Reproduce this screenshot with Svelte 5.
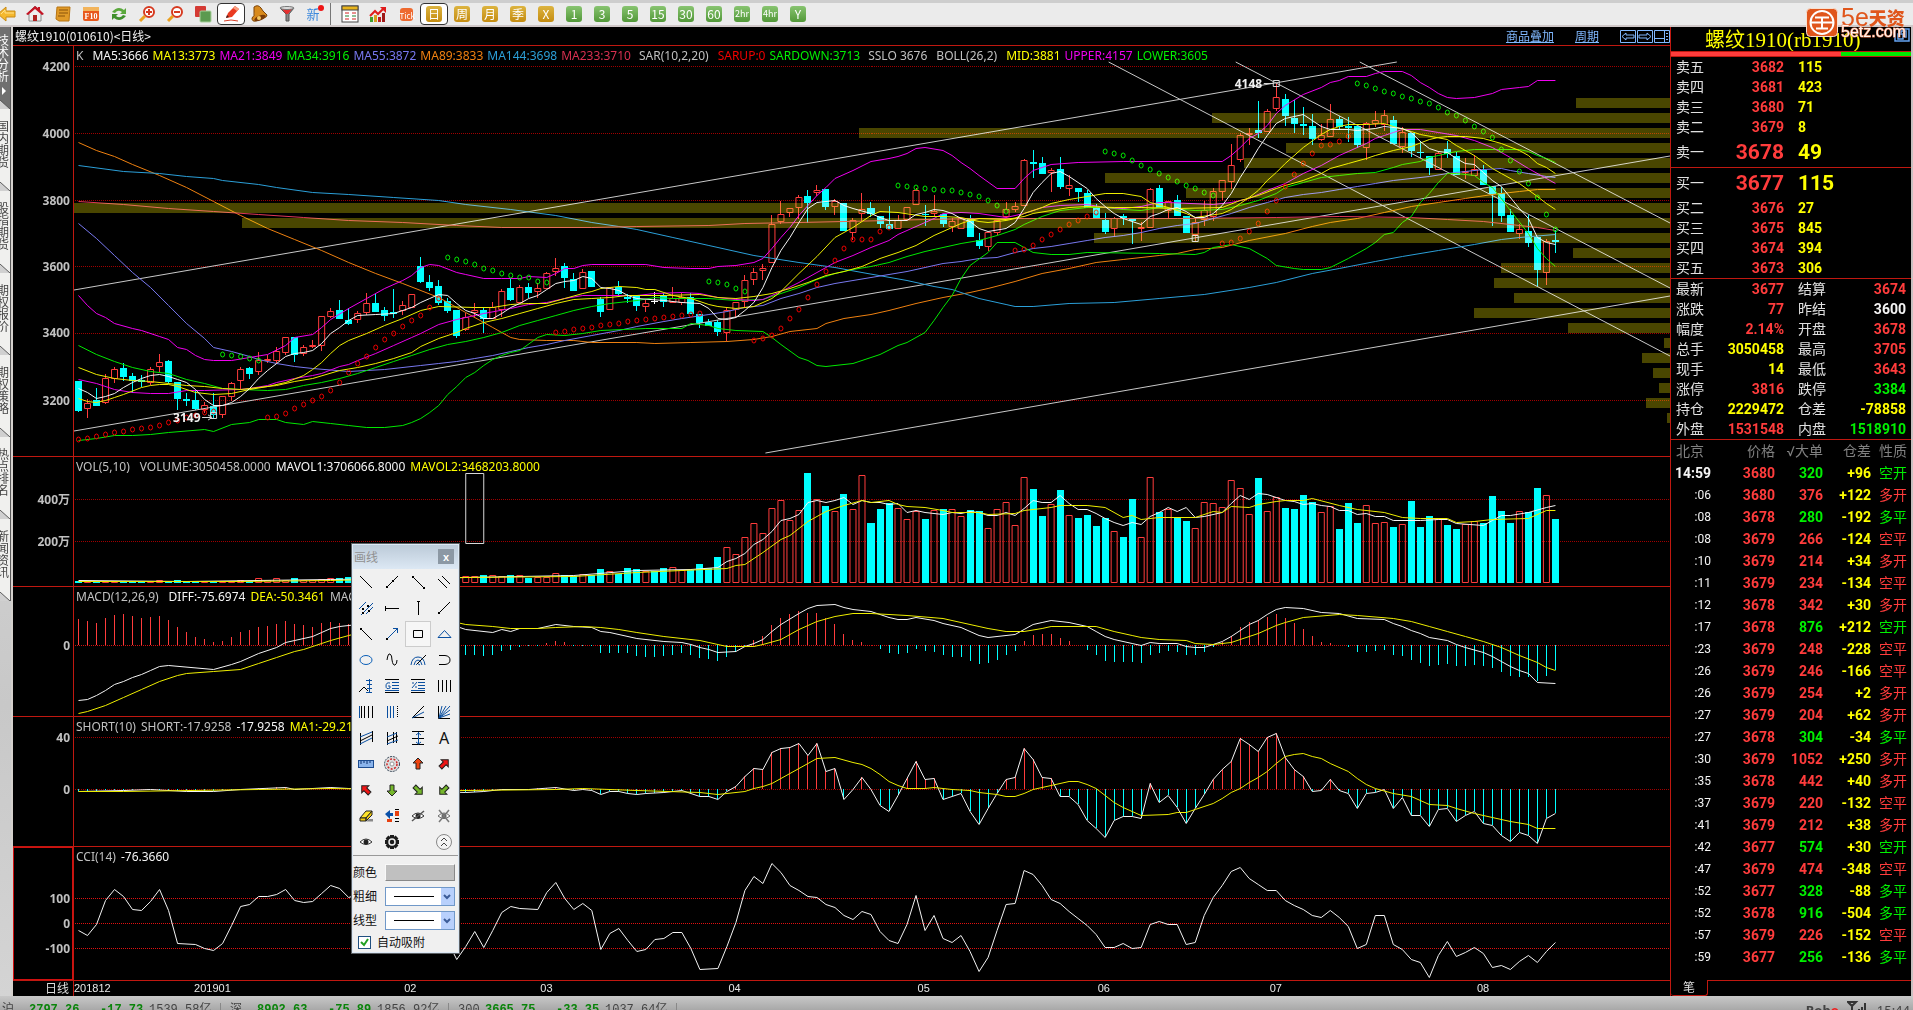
<script>
  const STEP = 9;
  const X0 = 79.5;
  const xOf = (i) => X0 + STEP * i;

  // Each bar: direction (r = up, c = down, w = flat), high, body top, body bottom, low.
  const candles = `c381,381,411,412 r399,403,409,418 c388,400,406,406 r374,378,403,404 r367,369,379,383 c363,368,377,381 c373,376,381,393 c375,380,382,387 r367,369,383,385 r354,362,367,373
c360,361,382,384 c382,382,399,410 c393,399,401,406 c390,400,409,410 r402,405,410,413 c393,406,415,418 r396,396,415,418 r382,383,397,401 r367,369,381,390 c367,368,374,379
r352,360,372,375 r355,359,361,363 r347,351,361,363 r337,337,353,355 c337,337,355,362 r345,347,354,356 r340,345,347,348 r316,316,346,351 r308,311,317,318 c300,310,319,319
c308,320,324,325 r311,313,320,323 r293,303,313,315 c294,303,312,312 c307,310,316,321 c289,312,314,318 r301,305,311,315 r294,294,308,308 c257,266,282,283 c275,282,288,291
c280,286,303,305 c298,301,311,313 c310,310,336,338 r313,317,330,331 r303,310,313,317 c308,310,319,333 r302,307,319,319 r289,291,310,317 c279,288,300,301 r285,287,303,303
c283,287,293,298 r283,288,292,298 r272,273,289,289 r258,268,272,276 c263,266,278,288 c273,279,291,291 r269,272,289,289 c271,271,287,287 c297,299,312,317 r287,287,310,310
c281,287,294,297 c294,297,299,303 c295,295,306,311 r300,303,307,312 w292,301,302,304 c293,296,302,307 r287,298,303,303 r293,297,303,305 c293,297,314,314 c314,314,323,328
c319,322,326,326 c320,322,332,336 r308,310,333,341 r302,302,310,318 r275,280,302,307 r268,272,280,285 r264,268,271,280 r215,224,263,263 r201,214,222,224 r208,208,213,217
r195,197,208,219 c190,196,203,223 r185,190,193,196 c189,189,207,210 r199,201,207,215 c203,203,231,231 r218,220,233,240 r193,209,214,221 c202,208,214,217 c216,216,224,228
c206,224,229,229 r215,220,229,229 r207,207,220,220 r188,190,205,205 c205,214,215,226 r195,211,214,217 c214,214,224,227 r218,221,227,232 r218,218,229,229 c215,218,237,237
c233,240,246,249 r232,232,247,251 r220,220,233,235 r202,209,217,219 r202,206,210,212 r159,160,206,206 c150,162,164,178 c157,163,174,174 r168,170,173,192 c157,169,187,189
r175,185,189,196 c188,188,192,202 c190,193,208,208 c204,207,218,218 c213,220,232,234 r217,218,229,237 c214,216,218,225 c219,219,221,244 r222,227,229,241 r188,189,228,228
c185,188,208,208 r201,201,211,219 c195,200,216,216 c216,216,233,233 r218,222,235,242 r201,210,220,226 r188,191,217,221 r180,180,192,200 r144,165,182,189 r133,135,160,162
r128,133,135,145 c101,130,133,138 r109,111,132,132 r83,97,109,111 c94,99,116,126 c100,118,124,133 c107,124,126,135 c114,126,139,145 r124,135,140,141 r104,119,137,137
c116,119,127,129 c117,126,128,142 c126,126,145,148 r122,123,148,160 r111,120,124,127 r110,115,125,131 c116,120,144,144 r127,132,147,153 c133,133,151,157 c141,152,153,158
c156,156,168,175 r151,153,170,170 c141,149,154,158 c152,156,175,175 r158,171,173,179 r155,169,176,176 c165,170,185,185 c186,186,194,226 c187,193,216,222 c209,215,232,232
r224,229,234,239 c215,231,243,247 c237,237,270,287 r239,241,273,285 c230,240,242,253`
    .split(/\s+/)
    .map((s, i) => {
      const [h, t, b, l] = s.slice(1).split(',').map(Number);
      return { i, dir: s[0], h, t, b, l };
    });

  const volTops = `581 581 581 581 581 581 581 581 581 580 581 580 581 581 581 581 581 581 580 581 578 580 578 580 578 580 580 579 578 578
577 577 576 576 577 576 577 577 574 575 574 575 575 576 576 575 575 576 575 575 578 577 577 573 575 576 574 575 569 571
574 568 569 571 571 568 567 570 570 564 568 557 547 554 537 523 533 508 500 520 510 473 499 506 511 494 509 475 523 509
503 508 519 511 519 510 509 509 516 510 511 528 509 502 525 477 489 516 504 490 515 518 515 526 518 531 537 499 537 477
512 509 518 521 528 502 503 507 480 488 514 478 511 497 508 509 495 502 512 506 529 503 523 505 523 522 527 524 501 527
516 519 525 529 524 521 523 496 511 523 511 512 488 495 519`
    .split(/\s+/)
    .map(Number);

  const macdEnds = `619 621 623 618 615 614 616 618 617 616 620 627 632 637 639 642 641 637 632 630 627 626 624 621 624 625 627 623 622 623
624 626 628 629 631 633 634 636 638 640 642 648 652 655 655 656 655 651 650 647 646 646 643 641 642 646 646 646 653 653
653 653 656 657 657 656 655 653 655 658 659 661 657 652 646 640 636 625 618 614 611 613 613 618 624 634 640 642 645 649
653 654 653 649 651 652 655 657 657 661 664 663 660 655 651 641 635 634 634 638 641 645 650 655 661 662 662 662 663 655
653 651 652 655 655 652 647 642 636 627 622 620 617 614 618 623 629 636 642 643 645 647 652 652 651 650 655 656 660 663
666 665 664 666 666 665 666 668 672 676 677 677 681 676 670`
    .split(/\s+/)
    .map(Number);

  const shortLine =
    '0,791 5,790 8,789 12,791 15,791 18,789 23,787 24,789 28,787 30,788 36,790 43,792 45,791 47,789 50,789 53,787 55,790 56,789 57,790 58,794 59,791 60,791 61,793 62,794 63,793 65,792 67,790 69,796 70,796 71,799 72,791 73,786 74,776 75,768 76,769 77,752 78,748 79,747 80,743 81,755 82,743 83,771 84,768 85,799 86,789 87,777 88,789 89,805 90,811 91,795 92,778 93,761 94,779 95,778 96,799 97,796 98,793 99,811 100,824 101,808 102,793 103,779 104,777 105,748 106,759 107,777 108,778 109,796 110,796 111,804 112,820 113,828 114,837 115,820 116,816 117,816 118,818 119,783 120,802 121,795 122,807 123,823 124,808 125,794 126,779 127,769 128,761 129,738 130,744 131,751 132,737 133,733 134,757 135,769 136,776 137,791 138,790 139,779 140,790 141,793 142,808 143,793 144,792 145,789 146,808 147,797 148,815 149,815 150,826 151,809 152,808 153,821 154,815 155,811 156,823 157,825 158,835 159,841 160,832 161,835 162,843 163,818 164,813';

  function expand(str) {
    const pts = str.split(' ').map((p) => p.split(',').map(Number));
    const out = [];
    for (let k = 0; k < pts.length - 1; k++) {
      const [a, ya] = pts[k];
      const [b, yb] = pts[k + 1];
      for (let i = a; i < b; i++) out.push(ya + ((yb - ya) * (i - a)) / (b - a));
    }
    out.push(pts[pts.length - 1][1]);
    return out;
  }
  const shortVals = expand(shortLine);

  const toPoints = (str) =>
    str
      .split(' ')
      .map((p) => {
        const [i, y] = p.split(',').map(Number);
        return `${xOf(i)},${y + 0.5}`;
      })
      .join(' ');

  const line = (color, data) => ({ color, points: toPoints(data) });

  const mainLines = [
    line('#ee8010', '0,142 2,150 4,156 6,164 9,175 12,187 15,201 18,215 21,228 24,239 27,250 30,262 33,273 36,283 40,297 43,312 46,327 48,337 49,339 52,340 55,340 57,342 62,342 64,343 68,342 72,341 75,339 77,336 79,331 82,328 83,323 85,318 88,314 90,310 93,303 96,297 99,292 101,288 104,281 107,273 110,268 113,262 116,259 120,255 122,253 124,249 127,247 130,240 134,233 137,226 139,222 142,218 145,212 148,206 151,202 154,198 157,194 160,191 162,189 164,189'),
    line('#2b9fd8', '0,165 5,171 9,173 12,176 15,178 16,180 20,184 22,187 26,192 30,194 35,197 40,200 43,204 48,209 53,215 57,222 60,226 62,229 66,237 70,245 75,255 80,262 84,267 87,272 92,280 95,286 97,289 100,298 103,304 104,306 106,306 110,303 115,302 120,298 125,294 130,287 133,282 137,273 140,268 144,261 147,256 151,250 155,244 158,239 160,237 164,234'),
    line('#e03858', '0,201 5,204 10,208 15,211 20,214 25,217 30,220 36,222 42,225 47,227 57,227 62,226 70,225 74,223 80,222 85,221 90,220 94,219 100,218 105,218 122,218 133,217 140,216 148,217 152,219 156,221 160,225 162,227 164,230'),
    line('#7878f0', '0,223 2,238 4,255 6,272 8,287 10,305 12,323 14,338 15,347 17,351 19,356 20,359 22,363 24,366 26,368 30,371 34,369 38,365 40,363 42,361 44,358 46,355 48,351 50,347 52,344 54,340 57,335 60,330 62,326 65,321 67,318 70,314 72,311 74,307 76,305 78,298 80,293 82,287 84,283 86,280 88,277 90,274 92,271 94,267 96,263 98,261 100,258 102,257 104,252 106,248 108,246 110,243 112,240 114,237 116,235 118,232 120,228 122,225 124,223 126,218 128,213 130,207 132,202 134,197 136,194 138,192 140,189 142,186 144,183 146,180 150,176 152,173 154,171 156,169 158,168 159,170 161,173 163,176 164,177'),
    line('#00e800', '0,345 2,354 4,361 6,367 8,371 10,373 12,379 14,383 16,388 18,389 21,390 23,389 25,385 27,382 29,378 31,373 33,367 35,361 37,355 39,349 41,344 43,341 45,337 47,332 49,325 51,320 53,315 55,310 57,306 59,303 62,300 64,297 66,298 70,298 73,300 76,299 78,293 80,287 82,279 84,273 86,269 88,266 90,262 92,256 94,251 96,247 98,243 100,240 102,235 104,229 105,224 106,220 107,216 108,213 109,210 110,209 112,207 114,207 116,209 118,210 120,207 124,210 127,209 129,205 131,200 133,193 134,187 136,182 138,177 140,175 142,173 144,172 146,167 147,164 149,161 150,157 151,155 152,153 153,151 154,150 155,149 160,149 161,151 162,155 163,158 164,162'),
    line('#e800e8', '0,379 2,383 4,389 6,392 8,393 10,393 12,390 14,390 18,389 19,388 21,385 22,382 24,378 26,375 27,373 29,366 30,364 31,360 33,353 35,345 37,337 38,333 40,324 42,319 45,313 48,308 50,304 52,302 54,298 56,295 62,295 64,293 67,292 69,293 71,297 73,299 75,300 76,299 77,295 78,291 80,282 82,272 84,262 86,255 88,247 90,240 91,234 92,230 94,222 95,218 96,213 98,212 100,213 103,217 105,213 107,207 109,205 112,204 114,207 116,208 118,206 120,202 121,202 126,204 128,202 130,198 132,190 134,183 136,173 138,165 139,160 140,155 141,151 142,147 143,143 144,138 145,135 146,132 147,129 149,129 151,132 153,135 155,140 157,147 159,157 161,168 163,178 164,183'),
    line('#eeee00', '0,367 2,374 4,378 6,380 8,381 10,383 12,385 14,386 16,388 18,389 20,387 22,385 24,381 26,378 29,370 31,367 33,363 35,358 37,352 38,346 40,338 42,332 43,328 45,322 47,318 49,313 51,308 53,303 55,299 57,298 59,297 61,295 65,295 69,294 71,297 73,298 75,296 77,293 79,288 81,282 83,275 85,271 87,266 89,258 91,252 93,245 94,240 95,235 97,227 98,223 99,220 100,218 103,219 105,216 106,213 108,210 110,207 112,206 115,207 118,207 122,208 127,207 129,200 131,195 133,188 134,185 136,180 138,173 139,168 141,163 143,158 144,155 146,150 148,146 150,139 151,137 152,136 154,136 156,138 158,143 160,150 161,155 162,163 163,167 164,173'),
    line('#eeee00', '0,398 1,401 2,402 3,400 4,397 5,394 7,387 8,385 9,384 10,384 11,386 13,392 15,394 17,393 19,389 21,386 23,382 25,375 26,369 27,362 28,353 29,345 30,340 32,333 34,325 36,318 38,310 40,306 44,307 46,307 48,304 50,303 52,303 54,298 56,293 57,291 58,288 60,286 62,287 63,289 64,289 65,292 66,295 68,298 70,304 71,306 73,308 75,306 76,302 77,298 78,291 80,273 82,256 84,237 86,227 88,215 89,211 91,212 94,216 96,216 98,217 100,221 101,222 103,220 104,218 105,213 107,207 108,203 110,199 112,196 114,193 116,193 118,196 119,202 121,207 123,213 124,217 127,213 128,209 129,203 130,197 131,190 132,180 133,172 134,163 136,147 138,134 139,129 140,126 141,124 143,124 145,123 146,126 148,131 149,134 152,139 153,145 155,155 157,168 158,173 160,183 162,196 163,203 164,209'),
    line('#f000f0', '0,295 1,305 2,313 3,317 4,323 6,328 7,330 9,336 10,339 11,347 12,349 13,355 14,359 15,360 17,360 19,357 21,354 23,345 24,337 26,334 27,327 28,319 30,308 32,298 34,288 36,280 37,275 38,267 39,264 40,265 42,272 43,274 45,278 47,278 49,278 50,276 52,277 53,273 54,268 55,268 56,265 57,264 63,264 65,267 68,268 70,268 71,266 73,265 75,262 76,258 77,248 78,237 79,227 80,215 81,205 82,195 83,187 84,178 86,170 88,161 90,158 91,156 92,153 93,148 94,147 96,150 97,155 98,162 99,168 100,175 102,188 104,188 105,178 106,170 107,167 108,164 111,162 116,161 127,161 128,155 129,147 130,138 131,133 132,125 133,113 134,105 136,94 138,87 139,82 140,80 141,76 143,76 144,73 145,71 147,71 148,75 149,82 150,87 151,93 152,97 153,98 155,97 157,93 158,89 160,87 161,86 162,80 164,80'),
    line('#00e800', '0,440 2,438 4,435 6,435 8,434 10,432 14,429 15,431 17,424 19,422 20,419 22,419 23,422 25,424 26,421 28,423 30,425 32,427 34,427 36,425 37,422 38,418 39,412 40,405 41,394 42,386 43,377 44,372 45,365 46,359 47,355 48,352 49,350 51,337 52,334 54,335 56,333 58,330 63,328 67,328 68,323 70,325 71,328 73,330 76,331 77,337 78,344 80,357 81,360 82,365 83,366 86,363 88,357 89,354 91,345 92,342 93,337 94,332 95,320 96,307 97,295 98,278 99,265 101,252 102,242 104,242 105,247 106,252 108,254 110,254 112,252 120,253 124,254 125,252 126,247 128,244 130,248 132,258 133,265 135,268 136,269 138,269 139,267 141,258 143,248 144,242 145,234 146,232 147,222 148,216 149,202 150,193 151,182 152,173 153,173 155,175 156,182 157,187 158,198 159,210 161,233 162,248 163,258 164,266'),
    line('#f4f4f4', '0,388 1,392 2,398 3,396 4,393 5,387 6,382 7,378 8,375 9,374 10,376 11,379 12,382 13,389 14,399 15,405 16,405 17,402 18,396 19,388 20,378 21,370 22,363 23,356 24,353 25,352 26,350 27,343 28,333 29,327 30,320 31,315 33,314 35,313 36,310 37,307 38,302 39,298 40,294 41,295 42,303 43,310 44,313 45,318 46,318 47,313 48,307 49,303 50,298 51,295 52,289 53,283 54,281 55,280 56,276 57,278 58,287 59,288 60,290 61,295 62,298 65,300 67,302 69,303 70,308 71,318 72,319 73,317 74,310 75,302 76,287 77,267 78,250 79,237 80,222 81,208 82,202 83,201 84,200 85,205 86,208 88,213 89,217 90,220 92,220 93,214 94,212 95,209 96,210 97,213 98,218 99,221 100,228 101,231 103,228 104,222 105,208 106,192 107,182 108,173 109,171 110,176 111,182 112,188 113,198 114,206 115,213 116,218 118,224 119,216 120,213 121,209 122,207 123,211 124,217 125,217 126,213 127,205 128,193 129,177 130,163 131,148 132,135 133,123 134,118 135,116 136,114 137,120 138,126 139,129 141,129 142,130 144,128 145,126 147,128 148,132 149,141 150,148 151,151 152,152 153,158 154,163 155,164 156,172 157,180 158,186 160,208 161,218 162,237 163,242 164,244')
  ];

  const volLines = [
    line('#f4f4f4', '0,580 12,581 28,579 43,577 55,575 62,570 68,569 71,567 72,561 73,558 74,553 75,544 76,539 77,531 78,520 79,518 80,514 81,502 82,500 83,502 84,500 85,497 86,504 87,500 88,502 89,502 90,504 91,503 92,512 93,510 94,512 96,514 97,512 98,513 99,511 100,512 101,515 102,515 103,512 104,515 105,508 106,500 107,502 108,502 109,495 110,503 111,509 112,509 113,513 114,518 115,522 116,525 117,522 118,524 119,516 120,512 121,507 122,511 123,507 124,517 125,516 127,512 128,503 129,495 130,499 131,493 132,494 133,497 134,500 135,501 136,504 137,503 138,505 139,506 140,510 141,510 142,514 143,513 144,516 145,516 146,520 149,520 151,519 152,519 153,523 156,525 157,520 158,515 159,515 161,512 163,507 164,505'),
    line('#eeee00', '0,581 18,581 28,580 43,577 55,576 62,572 67,570 72,568 73,565 74,564 76,552 78,539 79,535 81,521 83,511 85,505 87,500 88,502 90,500 91,504 92,506 94,507 96,510 97,512 100,512 101,514 104,513 105,510 106,509 108,507 109,505 112,505 114,507 116,517 117,515 118,519 120,517 124,517 126,511 127,512 128,506 130,507 131,504 133,501 134,500 136,500 137,498 140,505 142,509 145,512 147,517 149,518 152,518 153,522 155,521 157,519 161,518 163,510 164,510')
  ];

  const macdLines = [
    line('#f4f4f4', '0,700 1,699 2,695 3,690 4,684 5,681 6,677 7,674 8,670 9,666 10,665 15,669 17,664 18,661 20,653 22,647 23,642 24,640 26,636 27,632 28,628 29,626 32,623 36,621 42,626 43,629 46,632 47,629 48,631 49,628 51,628 53,624 55,626 57,627 58,631 59,632 62,638 65,641 67,642 68,644 69,647 70,649 71,652 73,651 74,646 75,643 76,639 77,631 78,624 80,613 81,608 82,605 84,604 85,607 86,609 88,611 89,614 90,617 91,619 92,619 93,617 95,620 96,623 98,627 100,635 101,637 104,634 105,629 106,624 107,622 108,620 110,622 112,626 113,631 114,636 115,639 117,643 118,645 119,642 120,643 122,643 123,646 124,647 125,647 126,644 127,641 128,636 129,630 130,624 131,620 132,614 133,609 134,607 136,608 138,612 140,613 142,618 145,619 146,623 147,626 148,630 149,633 150,637 152,640 153,644 154,647 156,652 157,656 158,661 159,666 160,670 161,673 162,682 164,683'),
    line('#eeee00', '0,713 1,711 3,705 5,697 7,689 9,681 11,675 12,673 15,671 18,669 20,663 22,657 24,651 25,649 27,643 28,640 30,635 36,622 42,622 43,624 46,626 48,628 51,628 53,627 56,626 58,627 60,629 62,632 65,636 69,640 70,642 72,646 75,646 76,644 78,639 80,629 82,621 84,616 86,613 88,613 92,615 96,618 98,622 100,626 101,628 103,631 105,631 107,628 108,626 113,626 115,631 117,635 118,637 120,639 123,640 124,643 126,644 128,642 129,639 131,633 132,629 133,625 134,622 136,617 140,614 142,615 146,618 148,621 150,626 152,631 154,636 156,641 158,647 160,655 162,662 163,667 164,670')
  ];

  const shortLines = [
    line('#f4f4f4', shortLine),
    line('#eeee00', '0,791 5,791 20,789 28,788 43,790 53,789 56,788 62,790 69,792 71,794 74,791 75,788 76,786 77,783 78,778 79,773 80,768 81,763 82,758 84,757 86,762 87,764 88,768 89,774 90,781 91,785 92,788 94,788 95,787 97,789 99,790 100,792 102,794 103,796 104,796 105,793 106,789 108,785 110,781 111,781 112,784 113,788 114,795 115,802 116,807 117,811 118,815 121,814 122,812 123,812 124,809 126,803 127,798 128,792 129,788 130,782 131,777 132,771 133,763 134,756 135,754 136,753 137,756 138,758 139,763 141,771 142,778 143,784 144,788 146,793 148,796 150,804 152,805 153,808 155,813 157,817 159,821 161,824 162,828 164,828')
  ];

  const cciLines = [
    line('#f4f4f4', '0,930 1,935 2,924 3,900 4,889 5,896 6,909 7,910 8,901 9,889 10,910 11,943 13,944 14,948 15,950 16,943 17,925 18,906 19,904 20,896 21,896 22,894 23,889 24,900 25,902 26,901 27,893 28,885 29,888 30,897 36,880 39,905 42,959 43,946 44,931 45,947 46,930 47,912 48,906 49,908 51,909 52,892 53,882 54,898 55,909 56,903 57,910 58,949 59,933 60,928 61,940 62,951 63,949 64,939 65,938 66,932 67,932 68,948 69,969 71,968 72,946 73,922 74,890 75,876 76,883 77,863 78,872 79,885 80,890 81,896 82,897 83,904 84,907 85,915 86,919 87,911 88,914 89,931 90,940 91,943 92,924 93,895 94,930 95,915 96,938 97,942 98,935 99,951 100,971 101,957 102,930 103,904 104,903 105,870 106,874 107,885 108,899 109,903 110,911 111,918 112,925 113,934 114,947 115,947 116,943 117,948 118,947 119,924 120,921 121,924 122,924 123,944 124,942 125,915 126,897 127,885 128,871 129,867 130,878 131,884 132,890 133,890 134,900 135,905 136,909 137,915 138,917 139,910 140,917 141,926 142,948 143,944 144,915 145,915 146,944 147,949 148,959 149,962 150,977 151,955 152,941 153,956 154,952 155,947 156,953 157,967 158,965 159,969 160,961 161,955 162,962 163,951 164,942')
  ];

  const dots = (start, list) => list.map((y, k) => ({ x: xOf(start + k), y }));
  const sarGreen = [
    ...dots(16, [354, 355, 356, 358, 360]),
    ...dots(41, [257, 259, 261, 264, 268, 270, 273, 275, 277, 277, 281, 282]),
    ...dots(70, [281, 282, 284, 288, 291]),
    ...dots(91, [185, 186, 187, 188, 189, 190, 190, 192, 194, 196, 200, 205, 211]),
    ...dots(114, [151, 153, 155, 160, 165, 169, 173, 177, 181, 185, 188, 192, 195]),
    ...dots(142, [83, 85, 88, 91, 93, 96, 98, 101, 103, 107, 112, 115, 120, 126, 131, 137, 149, 160, 171, 183, 197, 214, 229])
  ];
  const sarRed = [
    ...dots(0, [439, 438, 436, 434, 432, 431, 429, 428, 427, 425, 422, 420, 417, 415, 412, 411]),
    ...dots(21, [417, 416, 413, 408, 404, 400, 396, 390, 382, 372, 363, 356, 347, 339, 333, 326, 320, 315, 307, 298]),
    ...dots(53, [332, 331, 329, 328, 327, 325, 324, 323, 321, 320, 319, 318, 317, 316, 315, 314, 313]),
    ...dots(75, [340, 338, 335, 328, 318, 309, 297, 284, 271, 260, 248, 239, 239, 239, 231, 227]),
    ...dots(104, [250, 249, 245, 239, 234, 229, 224, 220, 216, 212]),
    ...dots(127, [243, 242, 238, 231, 223, 211, 200, 186, 174, 163, 153, 145, 144, 141, 136])
  ];

  const profile = [1576, 1212, 860, 1286, 1244, 1105, 1186, 75, 243, 1094, 1573, 1501, 1494, 1514, 1474, 1568, 1664, 1642, 1653, 1659, 1646, 1667];

  const trends = [
    [75, 290, 1397, 62],
    [75, 431, 1670, 156],
    [1109, 62, 1670, 356],
    [1236, 62, 1670, 288],
    [1360, 62, 1670, 223],
    [766, 453, 1670, 296]
  ];

  const panels = [
    {
      id: 'main', top: 46, h: 410, ticks: [['4200', 66], ['4000', 133], ['3800', 200], ['3600', 266], ['3400', 333], ['3200', 400]], lines: mainLines,
      legend: [['K', 'dim'], ['MA5:3666', 'white lead'], ['MA13:3773', 'yellow'], ['MA21:3849', 'magenta'], ['MA34:3916', 'lime'], ['MA55:3872', 'slate'], ['MA89:3833', 'orange'], ['MA144:3698', 'blue'], ['MA233:3710', 'crimson'], ['SAR(10,2,20)', 'dim gap fn'], ['SARUP:0', 'red'], ['SARDOWN:3713', 'lime'], ['SSLO 3676', 'dim gap fn'], ['BOLL(26,2)', 'dim fn'], ['MID:3881', 'yellow'], ['UPPER:4157', 'magenta'], ['LOWER:3605', 'lime']]
    },
    {
      id: 'vol', top: 457, h: 129, ticks: [['400万', 499], ['200万', 541]], lines: volLines,
      legend: [['VOL(5,10)', 'dim fn'], ['VOLUME:3050458.0000', 'dim'], ['MAVOL1:3706066.8000', 'white'], ['MAVOL2:3468203.8000', 'yellow']]
    },
    {
      id: 'macd', top: 587, h: 129, ticks: [['0', 645]], lines: macdLines,
      legend: [['MACD(12,26,9)', 'dim fn'], ['DIFF:-75.6974', 'white'], ['DEA:-50.3461', 'yellow'], ['MACD:-50.7026', 'dim']]
    },
    {
      id: 'short', top: 717, h: 129, ticks: [['40', 737], ['0', 789]], lines: shortLines,
      legend: [['SHORT(10)', 'dim'], ['SHORT:-17.9258', 'dim'], ['-17.9258', 'white'], ['MA1:-29.2143', 'yellow']]
    },
    {
      id: 'cci', top: 847, h: 133, ticks: [['100', 898], ['0', 923], ['-100', 948]], lines: cciLines,
      legend: [['CCI(14)', 'dim'], ['-76.3660', 'white']]
    }
  ];

  const months = [['201812', 75], ['201901', 195], ['02', 405], ['03', 541], ['04', 729], ['05', 918], ['06', 1098], ['07', 1270], ['08', 1477]];
  const pctX = (x) => ((x - 75) / 1595) * 100;

  const sideTabs = ['技术分析', '国内期货', '股指期货', '期权报价', '期权策略', '热点排名', '新闻资讯'];

  const tools = [
    ['后退', '<path d="M0 9L8 2V6H17V12H8V16Z" fill="#f5b82e" stroke="#c98a14" stroke-width="1"/><path d="M3 9L7 5V8H16" fill="none" stroke="#ffe08a"/>'],
    ['首页', '<path d="M9 1L1 9H3V16H15V9H17Z" fill="#eee" stroke="#8a8a8a"/><path d="M9 1L0 9L2 10L9 4L16 10L18 9L14 5V2H12V3Z" fill="#c41424"/><rect x="7" y="10" width="4" height="6" fill="#b02020"/>'],
    ['便笺', '<path d="M3 2H16L15 16H5L2 14Z" fill="#e09a28" stroke="#b87412"/><path d="M5 5H14M5 8H14M4 11H11" stroke="#8a5208"/>'],
    ['F10', '<rect x="1" y="2" width="16" height="14" rx="2" fill="#e8581c"/><rect x="1" y="2" width="16" height="4" fill="#f2b45c"/><text x="9" y="14" font-size="8" font-weight="700" text-anchor="middle" fill="#fff" font-family="Liberation Serif,serif">F10</text>'],
    ['刷新', '<path d="M2 7Q8 0 14 5L16 3V9H10L12 7Q8 4 5 8Z" fill="#5aa83c"/><path d="M16 11Q10 18 4 13L2 15V9H8L6 11Q10 14 13 10Z" fill="#3f8f2c"/>'],
    ['放大', '<circle cx="11" cy="7" r="5" fill="#fff" stroke="#d63a20" stroke-width="2"/><path d="M8 7H14M11 4V10" stroke="#d63a20" stroke-width="2"/><path d="M7 11L2 16" stroke="#eba020" stroke-width="3"/>'],
    ['缩小', '<circle cx="11" cy="7" r="5" fill="#fff" stroke="#d63a20" stroke-width="2"/><path d="M8 7H14" stroke="#d63a20" stroke-width="2"/><path d="M7 11L2 16" stroke="#eba020" stroke-width="3"/>'],
    ['叠加', '<rect x="1" y="1" width="11" height="11" rx="1" fill="#d43a34"/><rect x="6" y="6" width="11" height="11" rx="1" fill="#5c9a50" stroke="#a8d09c"/>'],
    ['画线', '<path d="M4 13L6 8L13 1L17 4L10 12Z" fill="#ea3a20"/><path d="M13 1L17 4L15 6L11 3Z" fill="#f8a080"/><path d="M4 13L5 10L7 12Z" fill="#422"/><path d="M2 16Q9 14 16 16" stroke="#d84028" fill="none"/>'],
    ['预警', '<path d="M4 2Q8 -1 11 3L13 6L17 10Q17 12 14 13L6 16Q2 17 2 13Q5 11 4 7Z" fill="#d88a1c" stroke="#7a4208"/><ellipse cx="10" cy="13" rx="6" ry="2.5" transform="rotate(-22 10 13)" fill="#7a3c08"/><circle cx="9" cy="13" r="2" fill="#f6c860"/>'],
    ['筛选', '<path d="M2 3H16L11 9V16H8V9Z" fill="#888" stroke="#555"/><path d="M4 4H14L10 9H8Z" fill="#e43030"/><ellipse cx="9" cy="3" rx="7" ry="1.5" fill="#ddd" stroke="#777"/>'],
    ['新', '<text x="7" y="14" font-size="13" text-anchor="middle" fill="#3c88dc" font-family="Noto Sans CJK SC,sans-serif">新</text><circle cx="15" cy="3" r="3" fill="#ee1414"/>']
  ];
  const viewTools = [
    ['报表', '<rect x="1" y="1" width="16" height="16" fill="#fff" stroke="#444"/><rect x="1" y="1" width="16" height="4" fill="#e8b41c" stroke="#444"/><path d="M4 8H8M4 14H8M11 8H15M11 14H15" stroke="#d02020"/><path d="M4 11H8M11 11H15" stroke="#208030"/>'],
    ['走势', '<rect x="1" y="12" width="3" height="5" fill="#40a030"/><rect x="5" y="10" width="3" height="7" fill="#d8a020"/><rect x="9" y="12" width="3" height="5" fill="#c02020"/><rect x="13" y="8" width="3" height="9" fill="#a01818"/><path d="M1 11L6 6L9 9L15 3" stroke="#e01c1c" stroke-width="2" fill="none"/><path d="M11 2H17V8Z" fill="#e01c1c"/>']
  ];
  const periods = [['Tick', 'tick'], ['日', 'gold on'], ['周', 'gold'], ['月', 'gold'], ['季', 'gold'], ['X', 'gold'], ['1', 'green'], ['3', 'green'], ['5', 'green'], ['15', 'green'], ['30', 'green'], ['60', 'green'], ['2hr', 'green small'], ['4hr', 'green small'], ['Y', 'green']];

  const B = '#0a4fa0';
  const K = '#000';
  const sq = (x, y, c = K) => `<rect x="${x - 1}" y="${y - 1}" width="2" height="2" fill="${c}"/>`;
  const p = (d, c = K, w = 1, f = 'none') => `<path d="${d}" stroke="${c}" stroke-width="${w}" fill="${f}"/>`;
  const arrowUp = 'M9 3L14 8H11V14H7V8H4Z';
  const big = (rot, fill) => `<path d="${arrowUp}" transform="rotate(${rot} 9 9)" fill="${fill}" stroke="#222" stroke-width="1"/>`;
  const eye = '<path d="M3 9Q9 3 15 9Q9 14 3 9Z" fill="#fff" stroke="#333" stroke-width="1"/><circle cx="9" cy="9" r="2.5" fill="#222"/>';
  const drawTools = [
    ['直线', p('M3 3L15 15')],
    ['射线', p('M3 15L15 3') + sq(4, 14) + sq(10, 8)],
    ['线段', p('M3 3L15 15') + sq(4, 4) + sq(15, 15)],
    ['平行线', p('M3 6L12 15M7 3L15 11')],
    ['平行通道', p('M2 10L9 3M4 16L16 4M9 15L16 8', B) + sq(11, 7) + sq(6, 10) + sq(6, 14) + sq(12, 12)],
    ['水平线', p('M2.5 7V12M2 9.5H16')],
    ['垂直线', p('M8 2.5H11M9.5 2V16')],
    ['斜线', p('M3 15L15 3') + sq(4, 14)],
    ['下斜线', p('M3 3L15 15') + sq(4, 4)],
    ['箭头线', p('M3 15L15 3', B) + p('M10 3.5H14.5V8', B) + sq(4, 14)],
    ['矩形', p('M4.5 5.5H13.5V12.5H4.5Z', K, 1)],
    ['三角形', p('M3 12.5H16L9.5 5.5Z', B)],
    ['椭圆', '<ellipse cx="9" cy="9" rx="6" ry="4.5" fill="none" stroke="#0a5fb8"/>'],
    ['正弦线', p('M4 9Q5 2 7 3Q9 4 9 9Q10 15 12 14Q14 13 14 9')],
    ['黄金圆弧', p('M2 14Q3 6 9 6T16 14M5 14Q6 9 9 9T13 14M7 14Q8 11 11 14', B) + p('M8 13L17 4')],
    ['弧线', p('M4 4.5H10Q15 5 15 9T10 13.5H4')],
    ['波段', p('M2 15L7 10L11 14') + p('M12.5 2V16M9 3.5H15M10 7.5H15M10 11.5H15M9 15.5H15', B)],
    ['黄金分割', p('M2 2.5H16M2 15.5H16') + p('M9 5.5H16M9 8.5H16M9 11.5H16M2 13.5H16M7 6Q3 5 3 9T7 11V9H5', B)],
    ['百分比', p('M2 2.5H16M2 15.5H16') + p('M9 5.5H16M9 8.5H16M9 11.5H16M2 13.5H16M3 11L8 5M4 5V7M7 9V11', B)],
    ['周期线', p('M3.5 3V15M7.5 3V15M11.5 3V15M15.5 3V15')],
    ['斐波那契线', p('M2.5 3V15', B) + p('M4.5 3V15M7.5 3V15M11.5 3V15M15.5 3V15')],
    ['等周期线', p('M4.5 3V15M7.5 3V15M10.5 3V15', B) + '<path d="M14.5 3V15" stroke="#000" stroke-dasharray="1 1"/>'],
    ['速阻线', p('M3 14.5H15M3 15L15 3') + p('M3 15L15 9', B)],
    ['甘氏线', p('M3.5 3V15.5H15') + p('M4 15L7 3M4 15L15 3M4 15L15 7M4 15L15 11M4 15L11 3', B)],
    ['回归通道', p('M3.5 4V16M15.5 2V13') + p('M3 8L15 3M3 15L15 9', B) + p('M3 12L15 6')],
    ['标准差通道', p('M4.5 3V16M10.5 3V14M13.5 3V14') + p('M4 8L14 4M4 15L15 11', B) + p('M4 12L15 7')],
    ['量度', p('M3 2.5H15M3 9.5H15M3 15.5H15') + p('M9.5 3V15M7 6L9.5 4L12 6M7 13L9.5 15L12 13', B)],
    ['文字', '<text x="9" y="15" font-size="16" text-anchor="middle" fill="#111" font-family="Noto Sans,sans-serif">A</text>'],
    ['尺子', '<rect x="1.5" y="5.5" width="15" height="7" fill="#8ab4ec" stroke="#1c4c90"/><path d="M4 6V9M7 6V8M10 6V9M13 6V8" stroke="#0a3070"/>'],
    ['罗盘', '<circle cx="9" cy="9" r="7.5" fill="#ddd" stroke="#345" stroke-dasharray="2 1"/><circle cx="9" cy="9" r="5" fill="none" stroke="#d02828" stroke-width="1.5" stroke-dasharray="2 1.5"/><circle cx="9" cy="9" r="2" fill="#fff" stroke="#999"/>'],
    ['上箭头', big(0, '#ee4410')],
    ['右上箭头', big(45, '#f01414')],
    ['左上箭头', big(-45, '#f01414')],
    ['下箭头', big(180, '#76b82c')],
    ['右下箭头', big(135, '#76b82c')],
    ['左下箭头', big(225, '#76b82c')],
    ['橡皮', '<path d="M3 11L9 4H15L9 11Z" fill="#ffe428" stroke="#222"/><path d="M3 11H9V14H3ZM9 11L15 4V8L9 14Z" fill="#f2cc10" stroke="#222"/><path d="M9 14.5H16V12H12" fill="#888"/>'],
    ['移动', '<path d="M2 7L7 3V6H10V9H7V12Z" fill="#0a50a8"/><rect x="12" y="4" width="4" height="5" fill="#e84010"/><rect x="4" y="12" width="5" height="3" fill="#e84010"/><path d="M12 2.5H16M12 11.5H16M12 14.5H16" stroke="#000"/>'],
    ['隐藏', eye + p('M3 14L15 4', '#555', 1.5)],
    ['全部隐藏', '<g opacity="0.7">' + eye + p('M4 3L14 15M14 3L4 15', '#444', 1.5) + '</g>'],
    ['显示', eye],
    ['设置', '<circle cx="9" cy="9" r="6" fill="#1c1c1c"/><path d="M9 2V16M2 9H16M4 4L14 14M14 4L4 14" stroke="#1c1c1c" stroke-width="4"/><circle cx="9" cy="9" r="3" fill="none" stroke="#eee" stroke-width="1.5"/>'],
    null,
    ['收起', '<circle cx="9" cy="9" r="7.5" fill="#f4f4f4" stroke="#888"/><path d="M6 8L9 5L12 8M6 13L9 10L12 13" stroke="#444" fill="none"/>']
  ];

  const asks = [['卖五', 3682, 115], ['卖四', 3681, 423], ['卖三', 3680, 71], ['卖二', 3679, 8], ['卖一', 3678, 49]];
  const bids = [['买一', 3677, 115], ['买二', 3676, 27], ['买三', 3675, 845], ['买四', 3674, 394], ['买五', 3673, 306]];
  const stats = [
    ['最新', '3677', 'up', '结算', '3674', 'up'],
    ['涨跌', '77', 'up', '昨结', '3600', 'white'],
    ['幅度', '2.14%', 'up', '开盘', '3678', 'up'],
    ['总手', '3050458', 'yellow', '最高', '3705', 'up'],
    ['现手', '14', 'yellow', '最低', '3643', 'up'],
    ['涨停', '3816', 'up', '跌停', '3384', 'down'],
    ['持仓', '2229472', 'yellow', '仓差', '-78858', 'yellow'],
    ['外盘', '1531548', 'up', '内盘', '1518910', 'down']
  ];
  const trades = `14:59 3680 320 +96 空开 g|:06 3680 376 +122 多开 r|:08 3678 280 -192 多平 g|:08 3679 266 -124 空平 r|:10 3679 214 +34 多开 r|:11 3679 234 -134 空平 r|:12 3678 342 +30 多开 r|:17 3678 876 +212 空开 g|:23 3679 248 -228 空平 r|:26 3679 246 -166 空平 r|:26 3679 254 +2 多开 r|:27 3679 204 +62 多开 r|:27 3678 304 -34 多平 g|:30 3679 1052 +250 多开 r|:35 3678 442 +40 多开 r|:37 3679 220 -132 空平 r|:41 3679 212 +38 多开 r|:42 3677 574 +30 空开 g|:47 3679 474 -348 空平 r|:52 3677 328 -88 多平 g|:52 3678 916 -504 多平 g|:57 3679 226 -152 空平 r|:59 3677 256 -136 多平 g`
    .split('|')
    .map((s) => s.split(' '));

  const indices = [['沪', '2797.26', '-17.73', '1539.58亿'], ['深', '8902.63', '-75.89', '1856.92亿'], ['300', '3665.75', '-33.35', '1037.64亿']];
</script>

<div class="app">
  <header class="toolbar">
    <div class="group edit">
      {#each tools as [name, art]}
        <button class="tool" class:on={name === '画线'} aria-label={name}><svg width="18" height="18" viewBox="0 0 18 18">{@html art}</svg></button>
      {/each}
    </div>
    <div class="group">
      {#each viewTools as [name, art]}
        <button class="tool" aria-label={name}><svg width="18" height="18" viewBox="0 0 18 18">{@html art}</svg></button>
      {/each}
      {#each periods as [name, kind]}
        <button class="tool" class:on={kind.includes('on')}><span class="chip {kind}">{name}</span></button>
      {/each}
    </div>
  </header>

  <div class="body">
    <nav class="side">
      {#each sideTabs as t, k}
        <button class="side-tab" class:active={k === 0}>
          <span>{t}</span>
          {#if k === 0}<i class="arrow"></i>{/if}
          <svg class="slant" viewBox="0 0 11 9" preserveAspectRatio="none"><path d="M0 0L11 9H0Z" fill="#d0d0d0" /><path d="M0 0L11 9" stroke="#555" /></svg>
        </button>
      {/each}
    </nav>

    <main class="charts">
      <div class="chart-title">
        <h1>螺纹1910(010610)&lt;日线&gt;</h1>
        <div class="links">
          <a href="#overlay">商品叠加</a>
          <a href="#period">周期</a>
          <span class="nav-icons">
            <button aria-label="左移"><svg width="16" height="15" viewBox="0 0 16 15"><path d="M.5 1.5H15.5V13.5H.5Z" /><path d="M2 7.5L6 4V6H14V9H6V11Z" /></svg></button>
            <button aria-label="右移"><svg width="16" height="15" viewBox="0 0 16 15"><path d="M.5 1.5H15.5V13.5H.5Z" /><path d="M14 7.5L10 4V6H2V9H10V11Z" /></svg></button>
            <button aria-label="侧栏"><svg width="16" height="15" viewBox="0 0 16 15"><path d="M.5 1.5H15.5V13.5H.5ZM10.5 1V14M1 9.5H10M12 4.5H14M12 7.5H14M12 10.5H14" /></svg></button>
          </span>
        </div>
      </div>

      <div class="panels">
        {#each panels as panel}
          <section class="panel {panel.id}">
            <div class="axis">
              {#each panel.ticks as [label, y]}
                <span style="top: {((y + 0.5 - panel.top) / panel.h) * 100}%">{label}</span>
              {/each}
            </div>
            <div class="plot">
              <svg viewBox="75 {panel.top} 1595 {panel.h}" preserveAspectRatio="none" shape-rendering="crispEdges">
                {#each panel.ticks as [, y]}
                  <line class="grid" x1="76" x2="1670" y1={y + 0.5} y2={y + 0.5} />
                {/each}
                {#if panel.id === 'main'}
                  {#each candles as c}
                    <g class={c.dir}>
                      <rect class="wick" x={xOf(c.i) - 0.5} y={c.h} width="1" height={Math.max(0, c.t - c.h)} />
                      <rect class="wick" x={xOf(c.i) - 0.5} y={c.b} width="1" height={Math.max(0, c.l - c.b)} />
                      {#if c.dir === 'r'}
                        <rect class="hollow" x={xOf(c.i) - 3} y={c.t + 0.5} width="6" height={Math.max(1, c.b - c.t - 1)} />
                      {:else}
                        <rect class="solid" x={xOf(c.i) - 3.5} y={c.t} width="7" height={c.b - c.t} />
                      {/if}
                    </g>
                  {/each}
                  {#each trends as [x1, y1, x2, y2]}
                    <line class="trend" {x1} {y1} {x2} {y2} />
                  {/each}
                {:else if panel.id === 'vol'}
                  {#each volTops as y, i}
                    {#if candles[i].dir === 'r'}
                      <rect class="bar-up" x={xOf(i) - 3} y={y + 0.5} width="6" height={Math.max(1, 582 - y)} />
                    {:else}
                      <rect class="bar-down" x={xOf(i) - 3.5} {y} width="7" height={583 - y} />
                    {/if}
                  {/each}
                  <rect class="sketch" x="466.5" y="473.5" width="18" height="70" />
                {:else if panel.id === 'macd'}
                  {#each macdEnds as y, i}
                    <rect class={y < 645 ? 'hist-up' : 'hist-down'} x={xOf(i) - 0.5} y={Math.min(y, 645)} width="1" height={Math.abs(y - 645)} />
                  {/each}
                {:else if panel.id === 'short'}
                  {#each shortVals as y, i}
                    <rect class={y < 789 ? 'hist-up' : 'hist-down'} x={xOf(i) - 0.5} y={Math.min(y, 789)} width="1" height={Math.abs(y - 789)} />
                  {/each}
                {/if}
                {#each panel.lines as l}
                  <polyline points={l.points} stroke={l.color} />
                {/each}
                {#if panel.id === 'main'}
                  <g shape-rendering="auto">
                    {#each sarGreen as d}<ellipse cx={d.x} cy={d.y + 0.5} rx="2" ry="2.5" stroke="#00f000" />{/each}
                    {#each sarRed as d}<ellipse cx={d.x} cy={d.y + 0.5} rx="2" ry="2.5" stroke="#f00000" />{/each}
                  </g>
                  <path class="handle" d="M1273.5 80.5h6v6h-6zM1192.5 235.5h6v6h-6zM211.5 412.5h6v6h-6zM1264 83.5h9M203 417.5h9M209 415l4 2.5l-4 2.5" />
                  {#each profile as x, k}
                    <rect class="profile" {x} y={98 + 15 * k} width={1670 - x} height="10" />
                  {/each}
                {/if}
              </svg>
              <div class="legend">
                {#each panel.legend as [text, cls]}<span class={cls}>{text}</span>{/each}
              </div>
              {#if panel.id === 'main'}
                <span class="mark" style="left: {pctX(1235)}%; top: {((84 - 46) / 410) * 100}%">4148</span>
                <span class="mark" style="left: {pctX(174)}%; top: {((418 - 46) / 410) * 100}%">3149</span>
              {/if}
            </div>
          </section>
        {/each}
      </div>

      <div class="dates">
        <span class="unit">日线</span>
        <div class="months">
          {#each months as [m, x]}<span style="left: {pctX(x)}%">{m}</span>{/each}
        </div>
      </div>
    </main>

    <aside class="quote">
      <h2>螺纹<span>1910(rb1910)</span></h2>
      <button class="pop" aria-label="弹出窗口"><svg width="16" height="14" viewBox="0 0 16 14"><path d="M1 1H15V13H1ZM4 6H9V11H4ZM7 5V3H12V9H10" fill="none" stroke="#64a4f4" stroke-width="1.5" /></svg></button>
      <div class="ratio"><i></i></div>
      <table class="book">
        <tbody>
          {#each asks as [n, pr, q], k}
            <tr class:best={k === 4}><th scope="row">{n}</th><td class="up">{pr}</td><td class="yellow">{q}</td></tr>
          {/each}
        </tbody>
      </table>
      <table class="book">
        <tbody>
          {#each bids as [n, pr, q], k}
            <tr class:best={k === 0}><th scope="row">{n}</th><td class="up">{pr}</td><td class="yellow">{q}</td></tr>
          {/each}
        </tbody>
      </table>
      <table class="stats">
        <tbody>
          {#each stats as [a, av, ac, b, bv, bc]}
            <tr><th scope="row">{a}</th><td class={ac}>{av}</td><th scope="row" class="second">{b}</th><td class={bc}>{bv}</td></tr>
          {/each}
        </tbody>
      </table>
      <table class="trades">
        <thead><tr><th scope="col">北京</th><th scope="col">价格</th><th scope="col">√大单</th><th scope="col">仓差</th><th scope="col">性质</th></tr></thead>
        <tbody>
          {#each trades as [t, pr, q, d, kind, c], k}
            <tr>
              <td class:time={k > 0} class="white">{t}</td>
              <td class="up">{pr}</td>
              <td class={c === 'g' ? 'down' : 'up'}>{q}</td>
              <td class="yellow">{d}</td>
              <td class="kind {c === 'g' ? 'down' : 'up'}">{kind}</td>
            </tr>
          {/each}
        </tbody>
      </table>
      <div class="quote-tabs"><button>笔</button><i></i></div>
    </aside>
  </div>

  <footer class="status">
    {#each indices as [name, v, d, amt]}
      <div class="index"><span class="name">{name}</span><b>{v}</b><b class="delta">{d}</b><span class="amt">{amt}</span></div>
    {/each}
    <div class="right">
      <span class="robo">Rob<em>o</em></span>
      <svg width="22" height="12" viewBox="0 0 22 12"><path d="M1 1H9L5 5ZM5 5V12M12 12V8M15 12V6M18 12V2" fill="none" stroke="#333" stroke-width="2" /></svg>
      <span class="clock">15:44</span>
    </div>
  </footer>

  <div class="logo">
    <svg width="32" height="29" viewBox="0 0 32 29"><rect x="0.5" y="0.5" width="31" height="28" rx="4" fill="#e0561c" stroke="#f8e0d0" /><circle cx="16" cy="14.5" r="11.5" fill="none" stroke="#fff" stroke-width="2" /><path d="M9 9.5H23M5 14.5H27M16 10V21M10 20.5H22" fill="none" stroke="#fff" stroke-width="2" /></svg>
    <div><b><span>5e</span>天资</b><small>5etz.com</small></div>
  </div>

  <div class="palette">
    <div class="palette-head"><span>画线</span><button aria-label="关闭">x</button></div>
    <div class="palette-grid">
      {#each drawTools as t}
        {#if t}
          <button class:picked={t[0] === '矩形'} aria-label={t[0]}><svg width="18" height="18" viewBox="0 0 18 18">{@html t[1]}</svg></button>
        {:else}
          <span></span>
        {/if}
      {/each}
    </div>
    <div class="palette-form">
      <label for="pen-color">颜色</label>
      <button id="pen-color" class="swatch" aria-label="颜色"></button>
      <label for="pen-width">粗细</label>
      <div class="combo"><i></i><select id="pen-width"><option value="1"></option></select><svg width="13" height="17" viewBox="0 0 13 17"><rect width="13" height="17" fill="#b8d0fc" /><path d="M3 7L6 10L9 7" fill="none" stroke="#3c5c98" stroke-width="2" /></svg></div>
      <label for="pen-style">线型</label>
      <div class="combo"><i></i><select id="pen-style"><option value="solid"></option></select><svg width="13" height="17" viewBox="0 0 13 17"><rect width="13" height="17" fill="#b8d0fc" /><path d="M3 7L6 10L9 7" fill="none" stroke="#3c5c98" stroke-width="2" /></svg></div>
    </div>
    <label class="snap"><span class="tick"><input type="checkbox" checked /><svg width="13" height="13" viewBox="0 0 13 13"><path d="M3 6L6 9L10 3" fill="none" stroke="#22a022" stroke-width="2" /></svg></span>自动吸附</label>
  </div>
</div>

<style>
  :global(body) { margin: 0; background: #000; }
  .app { --red: #c01810; position: relative; display: flex; flex-direction: column; height: 100vh; overflow: hidden; background: #000; color: #ddd; font-family: 'Noto Sans', 'Noto Sans CJK SC', sans-serif; font-size: 12px; line-height: 16px; }
  button { padding: 0; border: 0; background: none; font: inherit; color: inherit; cursor: pointer; }
  h1, h2 { margin: 0; font-weight: 400; }

  .toolbar { display: flex; box-sizing: border-box; height: 27px; border-top: 3px solid #cdcdcd; border-bottom: 2px solid #d0c8c8; background: #ebebeb; overflow: hidden; flex: none; }
  .group { display: flex; }
  .edit { flex: none; margin-left: -7px; padding-right: 1px; margin-right: 5px; border-right: 1px solid #777; }
  .tool { display: flex; align-items: center; justify-content: center; box-sizing: border-box; width: 28px; height: 22px; }
  .tool svg { flex: none; }
  .tool.on { border: 1px solid #333; border-radius: 4px; background: #fff; }
  .chip { display: block; width: 16px; height: 16px; border-radius: 3px; color: #fff; text-align: center; font-size: 12px; line-height: 16px; font-family: 'Noto Sans CJK SC', sans-serif; white-space: nowrap; }
  .chip.gold { background: linear-gradient(#dcb440, #c48c10); }
  .chip.green { background: linear-gradient(#88c470, #529838); }
  .chip.tick { background: #ee6a30; font-size: 8px; }
  .chip.small { font-size: 9px; }

  .body { display: grid; grid-template-columns: 13px minmax(0, 1fr) 243px; flex: 1; min-height: 0; }
  .side { display: flex; flex-direction: column; background: linear-gradient(#e4e4e4, #c8c8c8 70%, #d4d4d4); border-right: 2px solid #d4d0cc; overflow: hidden; }
  .side-tab { position: relative; display: flex; flex-direction: column; flex: none; box-sizing: border-box; height: 82px; padding-top: 12px; border-right: 1px solid #555; background: #f0f0ee; color: #444; text-align: left; }
  .side-tab span { display: block; width: 12px; margin-left: -3px; line-height: 12px; font-size: 12px; word-break: break-all; }
  .side-tab.active { padding-top: 8px; background: #707070; color: #fff; }
  .arrow { display: block; width: 0; margin: 4px 0 0 2px; border: 4px solid transparent; border-left-color: #fff; border-right: 0; }
  .slant { position: absolute; left: 0; bottom: 0; width: 100%; height: 9px; }

  .charts { display: flex; flex-direction: column; min-width: 0; }
  .chart-title { display: flex; justify-content: space-between; align-items: center; height: 18px; border-bottom: 1px solid var(--red); flex: none; }
  .chart-title h1 { padding-left: 2px; font-size: 12px; color: #f0f0f0; font-family: 'Noto Sans CJK SC', sans-serif; }
  .links { display: flex; align-items: center; font-family: 'Noto Sans CJK SC', sans-serif; }
  .links a { margin-right: 21px; color: #80b8ff; }
  .nav-icons { display: flex; gap: 1px; }
  .nav-icons button { display: flex; }
  .nav-icons path { fill: none; stroke: #80b8ff; }

  .panels { display: grid; grid-template-rows: 411fr 130fr 130fr 130fr 134fr; flex: 1; min-height: 0; }
  .panel { display: grid; grid-template-columns: 61px minmax(0, 1fr); border-bottom: 1px solid var(--red); min-height: 0; }
  .axis { position: relative; border-right: 1px solid var(--red); }
  .cci .axis { box-shadow: inset 0 0 0 1px #d01010; }
  .axis span { position: absolute; right: 3px; transform: translateY(-50%); color: #c0c0c0; font-weight: 700; font-size: 12px; line-height: 16px; }
  .plot { position: relative; min-height: 0; }
  .plot svg { position: absolute; inset: 0; width: 100%; height: 100%; }
  .grid { stroke: #a00000; stroke-dasharray: 1 1; }
  .cci .grid { stroke: #e01010; }
  .macd .grid { stroke: #d01010; }
  polyline, ellipse, .handle, .trend, .sketch, .hollow, .bar-up { fill: none; vector-effect: non-scaling-stroke; }
  .trend { stroke: #c8c8c8; }
  .handle { stroke: #d8d8d8; }
  .sketch { stroke: #d8d8d8; }
  .r .wick { fill: #ff3c3c; }
  .hollow, .bar-up { stroke: #ff3c3c; }
  .c .wick, .c .solid, .bar-down, .hist-down { fill: #00ffff; }
  .w .wick, .w .solid { fill: #fff; }
  .hist-up { fill: #ff3c3c; }
  .profile { fill: #4a4600; mix-blend-mode: screen; }
  .legend { position: absolute; left: 2px; top: 2px; display: flex; gap: 5px; white-space: nowrap; }
  .main .legend { gap: 4px; }
  .lead { margin-left: 5px; }
  .gap { margin-left: 4px; }
  .fn { margin-right: 5px; }
  .mark { position: absolute; transform: translateY(-50%); color: #f0f0f0; font-weight: 700; }

  .dim { color: #c0c0c0; }
  .white { color: #f4f4f4; }
  .yellow { color: #ffff00; }
  .magenta { color: #f000f0; }
  .lime { color: #00f000; }
  .slate { color: #7878f0; }
  .orange { color: #f08010; }
  .blue { color: #2b9fd8; }
  .crimson { color: #d83050; }
  .red { color: #f00000; }
  .up { color: #ff3c3c; }
  .down { color: #00f000; }

  .dates { display: grid; grid-template-columns: 61px minmax(0, 1fr); height: 15px; line-height: 15px; flex: none; }
  .unit { padding-right: 4px; border-right: 1px solid var(--red); text-align: right; }
  .months { position: relative; font-size: 11px; }
  .months span { position: absolute; top: 0; font-family: 'Liberation Sans', sans-serif; color: #e8e8e8; }

  .quote { position: relative; display: flex; flex-direction: column; border-left: 1px solid var(--red); border-right: 2px solid #c8c0c0; font-family: Roboto, 'Noto Sans CJK SC', sans-serif; min-height: 0; }
  .quote h2 { height: 24px; padding-left: 34px; font-size: 20px; line-height: 23px; color: #ffff00; font-family: 'Noto Sans CJK SC', sans-serif; white-space: nowrap; }
  .quote h2 span { font-family: 'Liberation Serif', serif; font-size: 21px; }
  .pop { position: absolute; right: 1px; top: 1px; display: flex; }
  .ratio { height: 4px; border-top: 1px solid var(--red); border-bottom: 1px solid var(--red); background: #00e800; }
  .ratio i { display: block; width: 71%; height: 100%; background: #ff3c3c; }
  table { width: 100%; border-collapse: collapse; table-layout: fixed; }
  th, td { padding: 0; font-weight: 700; font-size: 14px; line-height: 20px; text-align: right; white-space: nowrap; }
  th { padding-left: 5px; font-weight: 400; text-align: left; color: #e0e0e0; }
  .book, .stats { border-bottom: 1px solid var(--red); }
  .book th, .stats th { width: 40px; }
  .book td:nth-child(2), .stats td:nth-child(2) { width: 68px; }
  .book td:nth-child(3) { padding-left: 14px; text-align: left; }
  .best th, .best td { line-height: 30px; }
  .best td { font-size: 21px; }
  .stats .second { padding-left: 14px; width: 44px; }
  .stats td:last-child { padding-right: 5px; }
  .trades th, .trades td { line-height: 22px; }
  .trades th { padding: 0; color: #808080; text-align: right; }
  .trades th:first-child { width: 40px; padding-left: 5px; box-sizing: border-box; text-align: left; }
  .trades th:nth-child(2) { width: 64px; }
  .trades th:nth-child(3), .trades th:nth-child(4) { width: 48px; }
  .trades th:last-child, .trades td:last-child { padding-right: 4px; }
  .trades .time { font-size: 12px; font-weight: 400; }
  .trades .kind { font-weight: 400; }
  .quote-tabs { display: flex; height: 16px; margin-top: auto; }
  .quote-tabs button { width: 37px; border: solid var(--red); border-width: 0 1px 1px 0; border-radius: 0 0 3px 3px; font-size: 12px; line-height: 14px; }
  .quote-tabs i { flex: 1; border-top: 1px solid var(--red); }

  .status { display: flex; height: 14px; flex: none; overflow: hidden; padding-left: 2px; background: linear-gradient(#c8c8c8, #a8a8a8); color: #444; font-family: 'Liberation Mono', 'Noto Sans CJK SC', monospace; font-size: 12px; line-height: 14px; }
  .index { display: grid; grid-template-columns: 27px 64px 56px 72px; box-sizing: border-box; width: 228px; height: 14px; padding-top: 7px; white-space: nowrap; }
  .index b { color: #0a840a; }
  .index b.delta { padding-left: 7px; }
  .index .amt { border-right: 1px solid #888; height: 14px; }
  .right { display: flex; gap: 8px; margin-left: auto; padding: 7px 3px 0 0; }
  .right svg { flex: none; margin-top: -2px; }
  .robo { font: 700 13px/14px 'Noto Sans', sans-serif; }
  .robo em { font-style: normal; color: #ee2020; }
  .clock { font: 13px/14px 'Noto Sans', sans-serif; }

  .logo { position: absolute; right: 5px; top: 8px; display: flex; gap: 3px; width: 102px; }
  .logo div { display: flex; flex-direction: column; }
  .logo b { display: flex; align-items: center; height: 18px; font: 900 18px/18px 'Noto Sans CJK SC', sans-serif; color: #e0561c; }
  .logo b span { font: 400 25px/18px 'Liberation Sans', sans-serif; }
  .logo small { font: 16px/12px 'Liberation Sans', sans-serif; color: #fff4ee; -webkit-text-stroke: 1px #e87850; paint-order: stroke fill; }

  .palette { position: absolute; left: 351px; top: 543px; box-sizing: border-box; width: 109px; padding: 1px; border: 1px solid #5c6064; background: #f0f0f0; box-shadow: inset 0 0 0 1px #dce8f4; color: #111; font-family: 'Noto Sans CJK SC', sans-serif; }
  .palette-head { display: flex; justify-content: space-between; height: 24px; padding: 0 4px 0 1px; background: linear-gradient(#bccad8, #dce8f4); color: #909090; line-height: 24px; }
  .palette-head button { width: 16px; height: 15px; margin-top: 4px; background: #8c98a4; color: #fff; font: 700 11px/14px 'Liberation Sans', sans-serif; }
  .palette-grid { display: grid; grid-template-columns: repeat(4, 26px); grid-auto-rows: 26px; }
  .palette-grid button { display: flex; align-items: center; justify-content: center; box-sizing: border-box; }
  .palette-grid .picked { border: 1px solid; border-color: #fff #999 #999 #fff; outline: 1px solid #ccc; outline-offset: -1px; background: #f6f6f6; }
  .palette-form { display: grid; grid-template-columns: 32px 70px; grid-auto-rows: 24px; align-items: center; border-top: 1px solid #999; padding: 4px 0 0; }
  .swatch { width: 70px; height: 17px; border: 1px solid; border-color: #f8f8f8 #888 #888 #f8f8f8; background: #c0c0c0; }
  .combo { position: relative; box-sizing: border-box; width: 70px; height: 19px; border: 1px solid #7098c8; background: #fff; }
  .combo select { width: 100%; height: 100%; border: 0; appearance: none; background: none; display: block; }
  .combo i { position: absolute; left: 8px; top: 8px; width: 40px; height: 1px; background: #000; }
  .combo svg { position: absolute; right: 0; top: 0; pointer-events: none; }
  .snap { display: flex; align-items: center; gap: 6px; height: 20px; padding-left: 5px; }
  .tick { position: relative; width: 13px; height: 13px; }
  .tick input { appearance: none; display: block; box-sizing: border-box; width: 13px; height: 13px; margin: 0; border: 1px solid #205080; background: #fff; }
  .tick svg { position: absolute; inset: 0; pointer-events: none; }
</style>
